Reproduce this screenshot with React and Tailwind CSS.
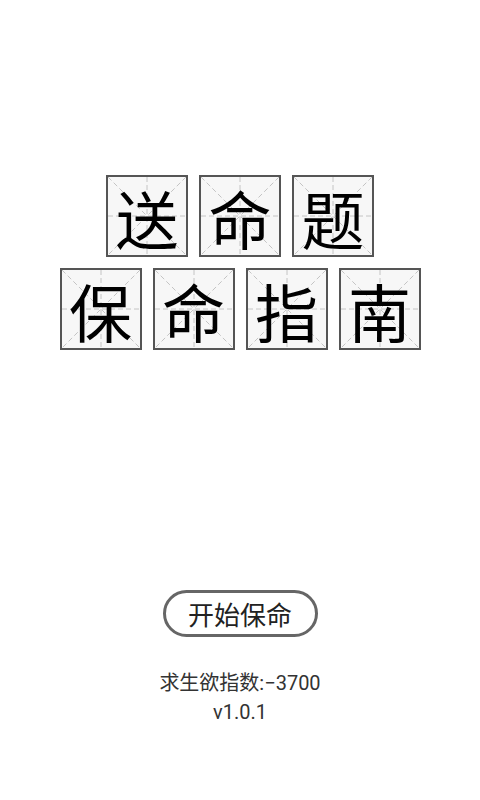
import React from "react";

const Box = ({ ch }) => (
  <div className="relative w-[82px] h-[82px] border-2 border-[#555] bg-[#f7f7f7] flex items-center justify-center">
    <svg className="absolute inset-0 w-full h-full" viewBox="0 0 78 78" preserveAspectRatio="none">
      <g stroke="#c4c4c4" strokeWidth="1" strokeDasharray="5 3" fill="none">
        <line x1="0" y1="39" x2="78" y2="39" />
        <line x1="39" y1="0" x2="39" y2="78" />
        <line x1="0" y1="0" x2="78" y2="78" />
        <line x1="78" y1="0" x2="0" y2="78" />
      </g>
    </svg>
    <span className="relative text-[63px] font-normal leading-none text-black" style={{ fontFamily: '"Noto Sans CJK SC", sans-serif' }}>{ch}</span>
  </div>
);

export default function App() {
  return (
    <div className="w-[480px] h-[800px] bg-white flex flex-col items-center" style={{ fontFamily: '"Noto Sans CJK SC", sans-serif' }}>
      <div className="mt-[175px] flex gap-[11px]">
        {["送", "命", "题"].map((c) => <Box key={c} ch={c} />)}
      </div>
      <div className="mt-[11px] flex gap-[11px]">
        {["保", "命", "指", "南"].map((c, i) => <Box key={i} ch={c} />)}
      </div>
      <button className="mt-[240px] w-[155px] h-[47px] rounded-full border-[3px] border-[#666] bg-white flex items-center justify-center text-[26px] text-[#222] leading-none">
        开始保命
      </button>
      <div className="mt-[32px] text-[20px] text-[#333] leading-[29px] text-center" style={{ fontFamily: 'Roboto, "Noto Sans CJK SC", sans-serif' }}>
        <div>求生欲指数:−3700</div>
        <div>v1.0.1</div>
      </div>
    </div>
  );
}
